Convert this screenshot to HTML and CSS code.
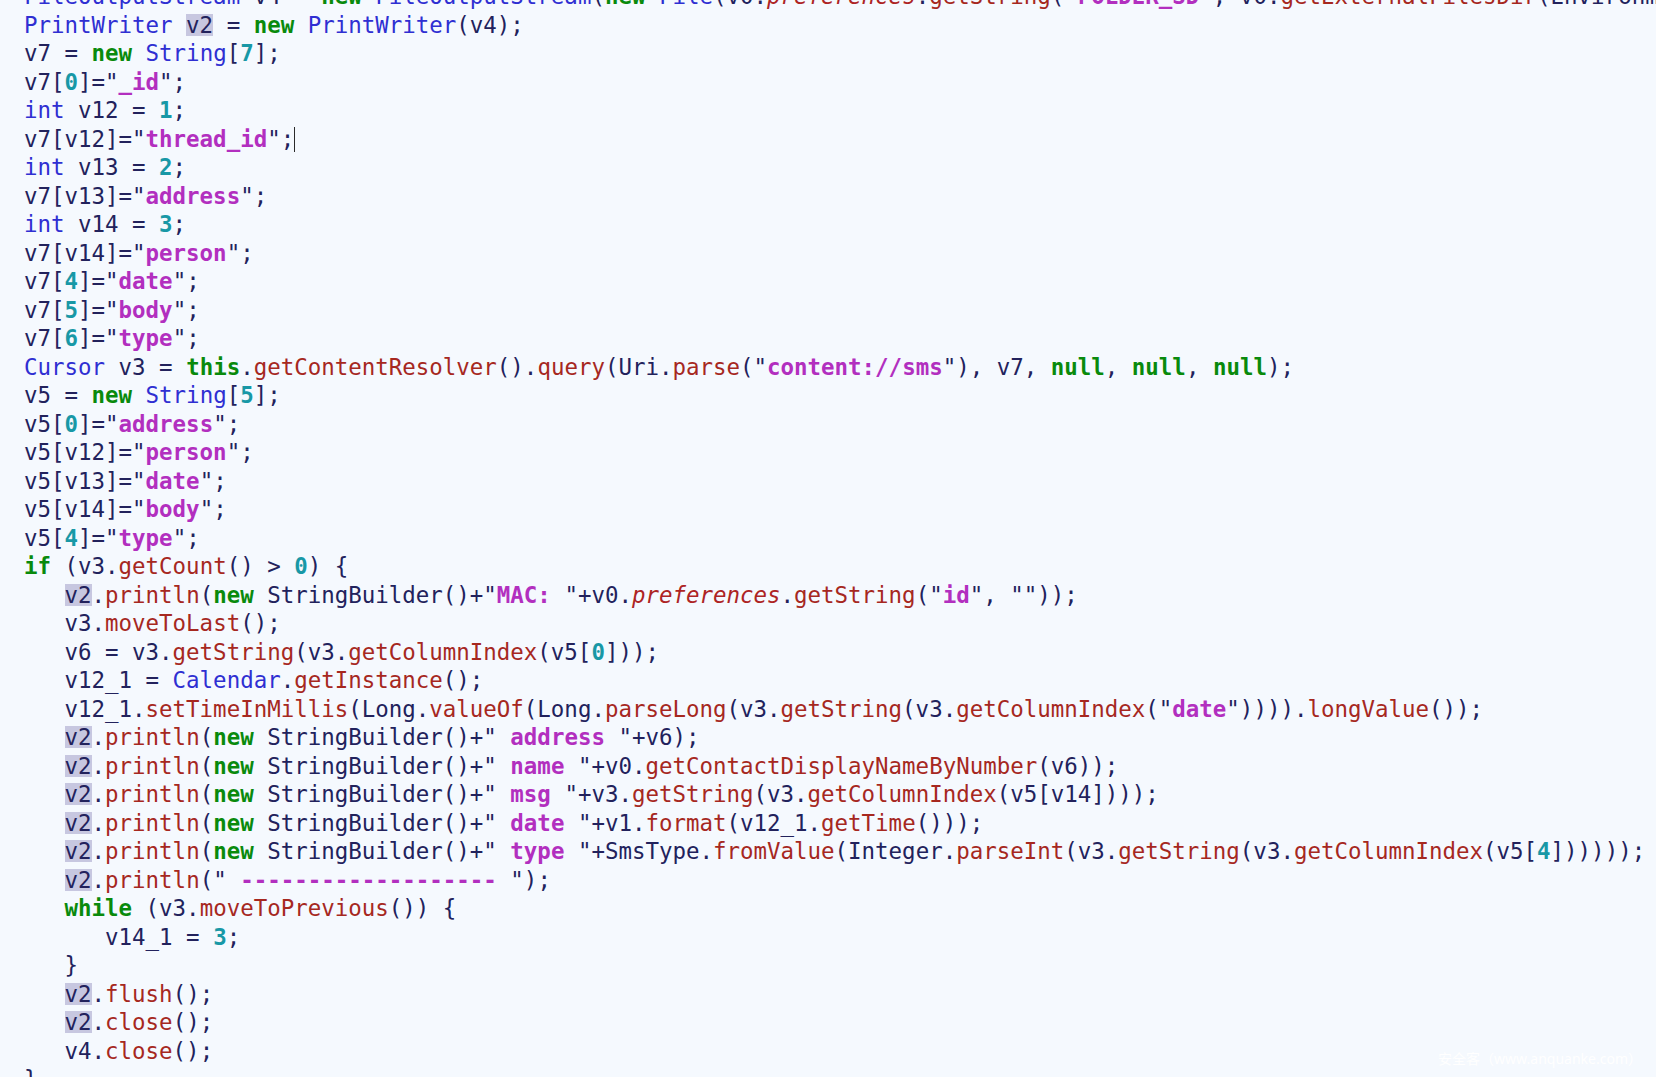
FILE: index.html
```html
<!DOCTYPE html>
<html lang="en">
<head>
  <meta charset="UTF-8" />
  <title>SmsActivity.java</title>
  <link rel="stylesheet" href="styles.css">
</head>
<body>

<pre class="code"><span class="t">FileOutputStream</span> v4 = <span class="k">new</span> <span class="t">FileOutputStream</span>(<span class="k">new</span> <span class="t">File</span>(v0.<span class="f">preferences</span>.<span class="m">getString</span>("<span class="s">FOLDER_SD</span>", v0.<span class="m">getExternalFilesDir</span>(Environment.DIRECTORY_DOWNLOADS)));
<span class="t">PrintWriter</span> <span class="h">v2</span> = <span class="k">new</span> <span class="t">PrintWriter</span>(v4);
v7 = <span class="k">new</span> <span class="t">String</span>[<span class="n">7</span>];
v7[<span class="n">0</span>]="<span class="s">_id</span>";
<span class="t">int</span> v12 = <span class="n">1</span>;
v7[v12]="<span class="s">thread_id</span>";<span class="caret"></span>
<span class="t">int</span> v13 = <span class="n">2</span>;
v7[v13]="<span class="s">address</span>";
<span class="t">int</span> v14 = <span class="n">3</span>;
v7[v14]="<span class="s">person</span>";
v7[<span class="n">4</span>]="<span class="s">date</span>";
v7[<span class="n">5</span>]="<span class="s">body</span>";
v7[<span class="n">6</span>]="<span class="s">type</span>";
<span class="t">Cursor</span> v3 = <span class="k">this</span>.<span class="m">getContentResolver</span>().<span class="m">query</span>(Uri.<span class="m">parse</span>("<span class="s">content://sms</span>"), v7, <span class="k">null</span>, <span class="k">null</span>, <span class="k">null</span>);
v5 = <span class="k">new</span> <span class="t">String</span>[<span class="n">5</span>];
v5[<span class="n">0</span>]="<span class="s">address</span>";
v5[v12]="<span class="s">person</span>";
v5[v13]="<span class="s">date</span>";
v5[v14]="<span class="s">body</span>";
v5[<span class="n">4</span>]="<span class="s">type</span>";
<span class="k">if</span> (v3.<span class="m">getCount</span>() &gt; <span class="n">0</span>) {
   <span class="h">v2</span>.<span class="m">println</span>(<span class="k">new</span> StringBuilder()+"<span class="s">MAC: </span>"+v0.<span class="f">preferences</span>.<span class="m">getString</span>("<span class="s">id</span>", ""));
   v3.<span class="m">moveToLast</span>();
   v6 = v3.<span class="m">getString</span>(v3.<span class="m">getColumnIndex</span>(v5[<span class="n">0</span>]));
   v12_1 = <span class="t">Calendar</span>.<span class="m">getInstance</span>();
   v12_1.<span class="m">setTimeInMillis</span>(Long.<span class="m">valueOf</span>(Long.<span class="m">parseLong</span>(v3.<span class="m">getString</span>(v3.<span class="m">getColumnIndex</span>("<span class="s">date</span>")))).<span class="m">longValue</span>());
   <span class="h">v2</span>.<span class="m">println</span>(<span class="k">new</span> StringBuilder()+"<span class="s"> address </span>"+v6);
   <span class="h">v2</span>.<span class="m">println</span>(<span class="k">new</span> StringBuilder()+"<span class="s"> name </span>"+v0.<span class="m">getContactDisplayNameByNumber</span>(v6));
   <span class="h">v2</span>.<span class="m">println</span>(<span class="k">new</span> StringBuilder()+"<span class="s"> msg </span>"+v3.<span class="m">getString</span>(v3.<span class="m">getColumnIndex</span>(v5[v14])));
   <span class="h">v2</span>.<span class="m">println</span>(<span class="k">new</span> StringBuilder()+"<span class="s"> date </span>"+v1.<span class="m">format</span>(v12_1.<span class="m">getTime</span>()));
   <span class="h">v2</span>.<span class="m">println</span>(<span class="k">new</span> StringBuilder()+"<span class="s"> type </span>"+SmsType.<span class="m">fromValue</span>(Integer.<span class="m">parseInt</span>(v3.<span class="m">getString</span>(v3.<span class="m">getColumnIndex</span>(v5[<span class="n">4</span>])))));
   <span class="h">v2</span>.<span class="m">println</span>("<span class="s"> ------------------- </span>");
   <span class="k">while</span> (v3.<span class="m">moveToPrevious</span>()) {
      v14_1 = <span class="n">3</span>;
   }
   <span class="h">v2</span>.<span class="m">flush</span>();
   <span class="h">v2</span>.<span class="m">close</span>();
   v4.<span class="m">close</span>();
}</pre>

<div class="watermark">安全客（www.anquanke.com）</div>

</body>
</html>
```

FILE: styles.css
```css
html, body {
  margin: 0;
  height: 100%;
  overflow: hidden;
}
body {
  background-color: #f5f9fe;
  position: relative;
}
.code {
  margin: -18px 0 0 0;
  padding-left: 24px;
  font-family: 'DejaVu Sans Mono', 'Liberation Mono', monospace;
  font-size: 22.45px;
  line-height: 28.5px;
  color: #22225c;
  white-space: pre;
}
.t {
  color: #2f2fd2;
}
.k {
  color: #098a0c;
  font-weight: bold;
}
.n {
  color: #1898a6;
  font-weight: bold;
}
.s {
  color: #b22fbf;
  font-weight: bold;
}
.m {
  color: #a6281f;
}
.f {
  color: #ad2424;
  font-style: italic;
}
.h {
  background: linear-gradient(#c7c7e0, #c7c7e0) center / 100% 22px no-repeat;
}
.caret {
  display: inline-block;
  width: 0;
  height: 25px;
  border-left: 1.5px solid #2a2a2a;
  vertical-align: -5px;
}
.watermark {
  position: absolute;
  right: 14px;
  bottom: 10px;
  font-family: 'Noto Sans', 'Noto Sans CJK SC', sans-serif;
  font-size: 14px;
  line-height: 16px;
  color: #ffffff;
}
```
